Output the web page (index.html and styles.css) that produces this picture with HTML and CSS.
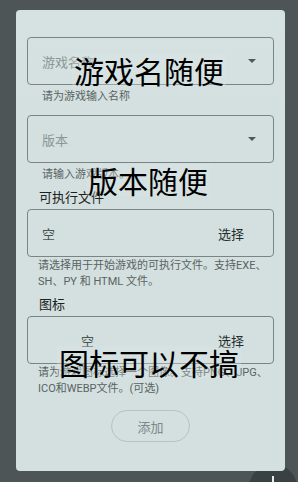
FILE: index.html
```html
<!DOCTYPE html>
<html lang="zh">
<head>
    <meta charset="UTF-8">
    <meta name="viewport" content="width=device-width, initial-scale=1.0">
    <title>添加游戏</title>
    <link rel="stylesheet" href="styles.css">
</head>
<body>
    <div class="dialog">
        <!-- 游戏名称 -->
        <div class="field select">
            <span class="placeholder">游戏名称</span>
            <span class="arrow"></span>
        </div>
        <p class="hint indent">请为游戏输入名称</p>

        <!-- 版本 -->
        <div class="field select second">
            <span class="placeholder">版本</span>
            <span class="arrow"></span>
        </div>
        <p class="hint indent">请输入游戏版本。</p>

        <h4 class="label">可执行文件</h4>
        <div class="field file">
            <span class="value">空</span>
            <span class="pick">选择</span>
        </div>
        <p class="hint">请选择用于开始游戏的可执行文件。支持EXE、<br>SH、PY 和 HTML 文件。</p>

        <h4 class="label">图标</h4>
        <div class="field file icon">
            <span class="value">空</span>
            <span class="pick">选择</span>
        </div>
        <p class="hint">请为游戏图标选择一个图像。支持PNG、JPG、<br>ICO和WEBP文件。(可选)</p>

        <div class="actions">
            <button type="button" class="add">添加</button>
        </div>
    </div>

    <!-- 批注 -->
    <div class="note note-name">游戏名随便</div>
    <div class="note note-ver">版本随便</div>
    <div class="note note-icon">图标可以不搞</div>

    <!-- 右下角按钮，只露出一部分 -->
    <div class="fab-clip">
        <div class="fab"><span class="plus"></span></div>
    </div>
</body>
</html>
```

FILE: styles.css
```css
html, body {
    height: 482px;
    overflow: hidden;
}

body {
    margin: 0;
    padding: 10px 0 0 16px;
    box-sizing: border-box;
    width: 298px;
    position: relative;
    background: #4e5556;
    font-family: Roboto, "Noto Sans CJK SC", sans-serif;
}

.dialog {
    width: 269px;
    height: 461px;
    box-sizing: border-box;
    padding: 27px 11px 0 11px;
    background: linear-gradient(#d6e2e1, #d3e0df 120px);
    border-radius: 4px;
    position: relative;
    z-index: 1;
}

.field {
    height: 48px;
    box-sizing: border-box;
    border: 1px solid #7b8484;
    border-radius: 4px;
    display: flex;
    align-items: center;
    justify-content: space-between;
    font-size: 13px;
}

.select {
    padding: 0 17px 0 14px;
}

.second {
    margin-top: 10px;
}

.placeholder {
    color: #8c9595;
}

.arrow {
    width: 0;
    height: 0;
    border-left: 4px solid transparent;
    border-right: 4px solid transparent;
    border-top: 4px solid #4f5757;
}

.file {
    padding: 0 29px 0 14px;
}

.file.icon {
    padding-left: 53px;
}

.value {
    color: #4b5353;
}

.pick {
    color: #262c2c;
}

.hint {
    margin: 0;
    font-size: 11px;
    line-height: 16px;
    color: #5a6262;
    padding-left: 11px;
    padding-top: 1px;
}

.hint.indent {
    padding-left: 15px;
    padding-top: 4px;
}

.label {
    margin: 6px 0 2px 12px;
    font-size: 13px;
    font-weight: normal;
    line-height: 18px;
    color: #1c2121;
}

.actions {
    display: flex;
    justify-content: center;
    margin-top: 13px;
}

.add {
    width: 79px;
    height: 32px;
    border: 1px solid #b7c2c1;
    border-radius: 16px;
    background: transparent;
    color: #7e8787;
    font-family: Roboto, "Noto Sans CJK SC", sans-serif;
    font-size: 13px;
}

.note {
    position: absolute;
    z-index: 2;
    font-family: "Noto Sans CJK SC", sans-serif;
    font-size: 30px;
    line-height: 32px;
    color: #000;
    background: rgba(222, 232, 231, 0.3);
    padding: 0 2px;
}

.note-name { left: 72px; top: 54px; }
.note-ver { left: 86px; top: 164px; }
.note-icon { left: 57px; top: 346px; }

.fab-clip {
    position: absolute;
    left: 249px;
    top: 464px;
    width: 49px;
    height: 18px;
    overflow: hidden;
}

.fab {
    position: relative;
    width: 48px;
    height: 48px;
    border-radius: 50%;
    background: #3a4142;
}

.plus {
    position: absolute;
    left: 23px;
    top: 12px;
    width: 2px;
    height: 24px;
    background: #e8eeee;
}
```
